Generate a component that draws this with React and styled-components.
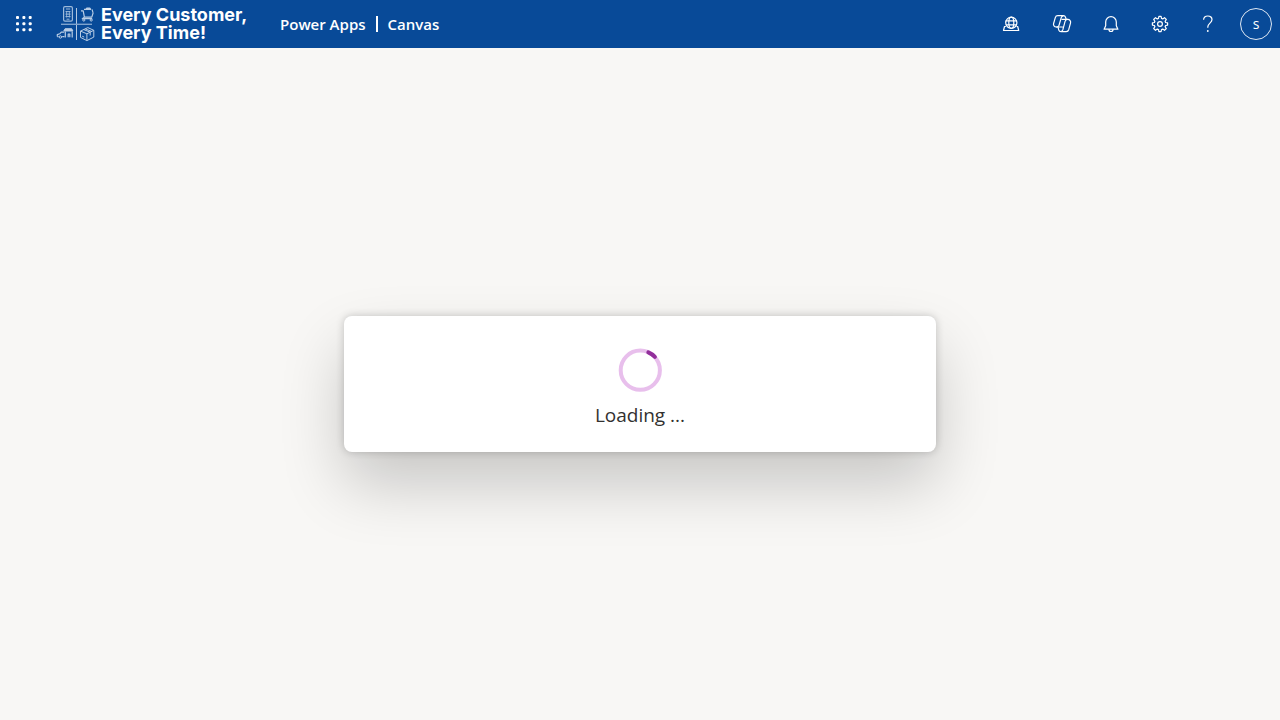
import React from "react";
import styled, { createGlobalStyle } from "styled-components";

const GlobalStyle = createGlobalStyle`
  * { box-sizing: border-box; }
  body {
    margin: 0;
    background: #f8f7f5;
    font-family: "Segoe UI", "Open Sans", "Noto Sans", sans-serif;
  }
`;

const Page = styled.div`
  min-height: 100vh;
  display: flex;
  flex-direction: column;
`;

const Header = styled.header`
  height: 48px;
  display: flex;
  align-items: center;
  background: #084a98;
  color: #fff;
`;

const IconButton = styled.button`
  width: ${(p) => (p.$wide ? 52 : 48)}px;
  height: 48px;
  padding: 0;
  border: 0;
  background: transparent;
  color: inherit;
  display: flex;
  align-items: center;
  justify-content: center;
  cursor: pointer;
`;

const BrandLink = styled.a`
  display: flex;
  align-items: center;
  gap: 5px;
  width: 216px;
  padding-left: 8px;
  color: inherit;
  text-decoration: none;
`;

const BrandText = styled.span`
  font: 700 18px/18px Inter, sans-serif;
  white-space: nowrap;
`;

const BrandLine = styled.span`
  display: block;
`;

const Nav = styled.nav`
  display: flex;
  align-items: center;
  gap: 10px;
  padding-left: 16px;
  font-size: 15px;
  line-height: 20px;
  font-weight: 600;
  white-space: nowrap;
`;

const NavLink = styled.a`
  color: inherit;
  text-decoration: none;
`;

const Divider = styled.span`
  width: 2px;
  height: 16px;
  background: #fff;
`;

const Actions = styled.div`
  display: flex;
  gap: 1px;
  margin-left: auto;
`;

const Account = styled.div`
  display: flex;
`;

const Avatar = styled.span`
  width: 32px;
  height: 32px;
  border: 1px solid #dfe8f3;
  border-radius: 50%;
  display: flex;
  align-items: center;
  justify-content: center;
  font: 400 14px/20px "Open Sans", sans-serif;
`;

const Main = styled.main`
  flex: 1;
  display: flex;
  align-items: center;
  justify-content: center;
`;

const Dialog = styled.section`
  width: 592px;
  max-width: 90%;
  padding: 32px 24px 23px;
  display: flex;
  flex-direction: column;
  align-items: center;
  gap: 9px;
  border-radius: 8px;
  background: #fff;
  box-shadow: 0 0 8px rgba(0, 0, 0, 0.2), 0 32px 64px rgba(0, 0, 0, 0.2);
`;

const LoadingText = styled.p`
  margin: 0;
  color: #323130;
  font-size: 19px;
  line-height: 28px;
`;

const Icon = ({ size = 20, children }) => (
  <svg
    width={size}
    height={size}
    viewBox={`0 0 ${size} ${size}`}
    fill="none"
    stroke="currentColor"
    strokeWidth="1.2"
    strokeLinejoin="round"
    strokeLinecap="round"
    aria-hidden="true"
  >
    {children}
  </svg>
);

const Waffle = () => (
  <Icon>
    <g fill="currentColor" stroke="none">
      {[3.6, 9.7, 15.8].map((y) =>
        [3.5, 9.9, 16.2].map((x) => (
          <rect key={`${x}-${y}`} x={x - 1.5} y={y - 1.5} width="3" height="3" rx="1" />
        ))
      )}
    </g>
  </Icon>
);

const BrandMark = () => (
  <svg width="40" height="38" viewBox="0 0 40 38" fill="none" stroke="#b9cde5" strokeLinejoin="round" aria-hidden="true">
    <path d="M20.5 3v32" stroke="#b4c9e2" />
    <path d="M5 19.3h31" stroke="#7fa3cd" strokeWidth="1.4" />
    <rect x="7.6" y="1.6" width="8.8" height="14.6" rx="1.4" stroke="#9dbada" strokeWidth="1.2" />
    <path d="M10 4h4.2M9.5 6.6h5M9.5 9.1h5M9.5 11.6h5M10.5 14.2h3" stroke="#9dbada" />
    <path d="M10.6 6v6.5M13.4 6v6.5" stroke="#9dbada" strokeWidth=".8" />
    <path d="M25 5.8h2.2l1.2 6.3h7.4l1.4-4.5M28 4.4h7M29.8 4.4l1-1.3h3l1 1.3M36 4.4l1 3.2" strokeWidth="1.2" />
    <path d="M28.4 12.1l-2.2 1.5h10" strokeWidth="1.1" />
    <circle cx="27.8" cy="15" r="1.1" />
    <circle cx="35.2" cy="15" r="1.1" />
    <path d="M1.3 31.6v-2l2.4-.8 1.6-1.6h2.9M1.3 31.6h1.3M6.2 31.6h2.3" strokeWidth="1.2" />
    <circle cx="4.4" cy="32" r="1.2" />
    <path d="M7.8 26l1.3-2.3h6.6l1.2 2.3z" fill="#b9cde5" />
    <path d="M9.3 26.5v6M16.2 26.5v6M12.2 32.3V29h1.6v3.300" strokeWidth="1.2" />
    <path d="M24.5 26.1l7.3-3.5 6 2.7v6.8l-6.9 3.5-6.4-3.2zM24.5 26.1l6.4 2.7 6.9-3.5M30.9 28.8v6.8M27.7 24.6l6.5 2.6v3.3M29.3 23.9l6.3 2.5M26.2 31.2l2 .9" />
  </svg>
);

const GlobeTray = () => (
  <Icon>
    <circle cx="10.3" cy="8.8" r="5.6" />
    <ellipse cx="10.3" cy="8.8" rx="2.5" ry="5.6" />
    <path d="M5.2 6.8h10.2M5.2 10.8h10.2" />
    <path d="M4.4 12.5h-.9L2.5 16.5h15.2l-1-4h-.8" />
  </Icon>
);

const Copilot = () => (
  <Icon>
    <path d="M14.2 5.3l-.8-2.3a2 2 0 0 0-1.9-1.3H5.8a2.6 2.6 0 0 0-2.5 1.9L1.6 9.5A2.7 2.7 0 0 0 4.2 13h6.3" />
    <path d="M6 13.1l.8 3a2.2 2.2 0 0 0 2.1 1.5h5.3a2.7 2.7 0 0 0 2.5-1.9l1.800-6.600A2.800 2.800 0 0 0 15.800 5.400h-5.800" />
    <path d="M11 1.8a2.300 2.300 0 0 0-1.700 1.700L7 11.300A2.400 2.400 0 0 1 4.600 13M9 17.500a2.300 2.300 0 0 0 1.800-1.600L13 7.700a2.600 2.600 0 0 1 2.400-2.300" />
  </Icon>
);

const Bell = () => (
  <Icon>
    <path d="M4.700 8a5.300 5.300 0 0 1 10.600 0v3.700l1.600 3.500H3.100l1.600-3.500z" />
    <path d="M8 15.500a2 2 0 0 0 4 0" />
  </Icon>
);

const Gear = () => (
  <Icon>
    <path d="M8.900 2.400h2.200l.4 2 1.200.5 1.800-1.200 1.800 1.800-1.200 1.800.5 1.200 2 .4v2.200l-2 .4-.5 1.200 1.200 1.800-1.800 1.800-1.800-1.200-1.200.5-.4 2H8.900l-.4-2-1.200-.5-1.800 1.200-1.800-1.800 1.200-1.800-.5-1.200-2-.4V8.900l2-.4.5-1.200-1.200-1.800 1.800-1.800 1.800 1.200 1.200-.5z" />
    <circle cx="10" cy="10" r="2.400" />
  </Icon>
);

const Help = () => (
  <Icon>
    <path d="M5.600 5.800c0-2.300 1.600-3.800 4.200-3.800 2.500 0 4.200 1.400 4.200 3.600 0 3.400-4.200 3.700-4.200 7.400v.8" strokeLinecap="butt" />
    <circle cx="9.800" cy="17" r=".9" fill="currentColor" stroke="none" />
  </Icon>
);

const Spinner = () => (
  <svg width="44" height="44" viewBox="0 0 44 44" fill="none" strokeWidth="4" role="img" aria-label="Loading">
    <circle cx="22.3" cy="22.2" r="19.6" stroke="#e8bfec" />
    <path d="M30.300 4.400a20 20 0 0 1 6.600 4.400" stroke="#922f9b" strokeLinecap="round" />
  </svg>
);

export default function App() {
  return (
    <Page>
      <GlobalStyle />
      <Header>
        <IconButton type="button" aria-label="App launcher"><Waffle /></IconButton>
        <BrandLink href="#">
          <BrandMark />
          <BrandText>
            <BrandLine>Every Customer,</BrandLine>
            <BrandLine>Every Time!</BrandLine>
          </BrandText>
        </BrandLink>
        <Nav>
          <NavLink href="#">Power Apps</NavLink>
          <Divider />
          <NavLink href="#">Canvas</NavLink>
        </Nav>
        <Actions>
          <IconButton type="button" $wide aria-label="Environment"><GlobeTray /></IconButton>
          <IconButton type="button" aria-label="Copilot"><Copilot /></IconButton>
          <IconButton type="button" aria-label="Notifications"><Bell /></IconButton>
          <Account>
            <IconButton type="button" aria-label="Settings"><Gear /></IconButton>
            <IconButton type="button" aria-label="Help"><Help /></IconButton>
            <IconButton type="button" aria-label="Account"><Avatar>s</Avatar></IconButton>
          </Account>
        </Actions>
      </Header>
      <Main>
        <Dialog role="dialog" aria-label="Loading">
          <Spinner />
          <LoadingText>Loading ...</LoadingText>
        </Dialog>
      </Main>
    </Page>
  );
}
